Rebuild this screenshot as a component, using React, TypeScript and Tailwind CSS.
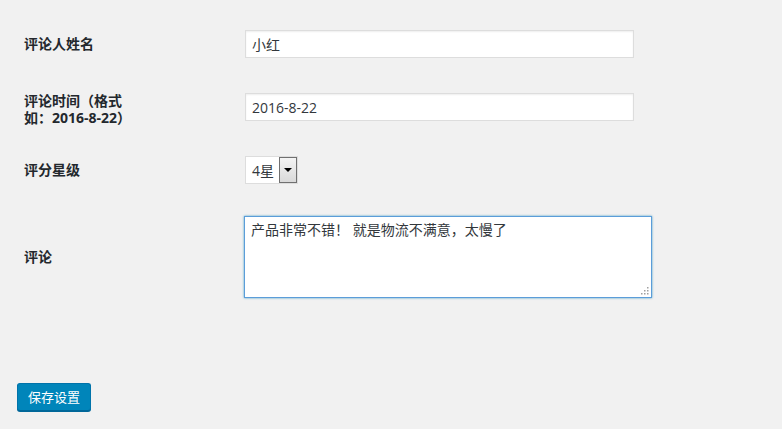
import React from "react";

const font = { fontFamily: '"Open Sans", "Noto Sans CJK SC", sans-serif' };

export default function App() {
  return (
    <div
      className="w-[782px] h-[429px] bg-[#f1f1f1] pl-[17px] pt-[30px] overflow-hidden text-[#23282d]"
      style={font}
    >
      <div className="pl-[7px]">
        <div className="flex items-center h-[28px]">
          <div className="w-[221px] text-[14px] font-bold leading-[18px]">评论人姓名</div>
          <div className="w-[389px] h-[28px] bg-white border border-[#dddddd] shadow-[inset_0_1px_2px_rgba(0,0,0,0.07)] flex items-center pl-[6px] text-[14px] text-[#32373c]">
            小红
          </div>
        </div>

        <div className="flex items-start h-[28px] mt-[35px]">
          <div className="w-[221px] text-[14px] font-bold leading-[17px] -mt-[1px]">
            评论时间（格式
            <br />
            如：2016-8-22）
          </div>
          <div className="w-[389px] h-[28px] bg-white border border-[#dddddd] shadow-[inset_0_1px_2px_rgba(0,0,0,0.07)] flex items-center pl-[6px] text-[14px] text-[#32373c]">
            2016-8-22
          </div>
        </div>

        <div className="flex items-center h-[28px] mt-[35px]">
          <div className="w-[221px] text-[14px] font-bold leading-[18px]">评分星级</div>
          <div className="w-[53px] h-[28px] bg-white border border-[#dddddd] flex items-center justify-between">
            <span className="pl-[6px] text-[14px] text-[#32373c]">4星</span>
            <div className="w-[18px] h-[26px] border border-[#707070] bg-gradient-to-b from-[#f4f4f4] to-[#d9d9d9] flex items-center justify-center">
              <div className="w-0 h-0 border-l-[4px] border-r-[4px] border-t-[4px] border-l-transparent border-r-transparent border-t-black" />
            </div>
          </div>
        </div>

        <div className="flex items-center mt-[32px]">
          <div className="w-[220px] text-[14px] font-bold leading-[18px]">评论</div>
          <div className="relative w-[408px] h-[82px] bg-white border border-[#5b9dd9] shadow-[0_0_2px_rgba(30,140,190,0.8)] pl-[6px] pt-[3px] text-[14px] leading-[20px] text-[#32373c]">
            产品非常不错！ 就是物流不满意，太慢了
            <svg className="absolute right-[2px] bottom-[2px]" width="8" height="8" viewBox="0 0 8 8">
              <rect x="6" y="0" width="1.5" height="1.5" fill="#a0a0a0" />
              <rect x="3" y="3" width="1.5" height="1.5" fill="#a0a0a0" />
              <rect x="6" y="3" width="1.5" height="1.5" fill="#a0a0a0" />
              <rect x="0" y="6" width="1.5" height="1.5" fill="#a0a0a0" />
              <rect x="3" y="6" width="1.5" height="1.5" fill="#a0a0a0" />
              <rect x="6" y="6" width="1.5" height="1.5" fill="#a0a0a0" />
            </svg>
          </div>
        </div>
      </div>

      <div className="mt-[85px]">
        <button
          className="w-[74px] h-[28px] rounded-[3px] bg-[#0085ba] border border-[#0073aa] border-b-[#006799] shadow-[0_1px_0_#006799] text-white text-[13px] leading-[26px] text-center"
          style={font}
        >
          保存设置
        </button>
      </div>
    </div>
  );
}
